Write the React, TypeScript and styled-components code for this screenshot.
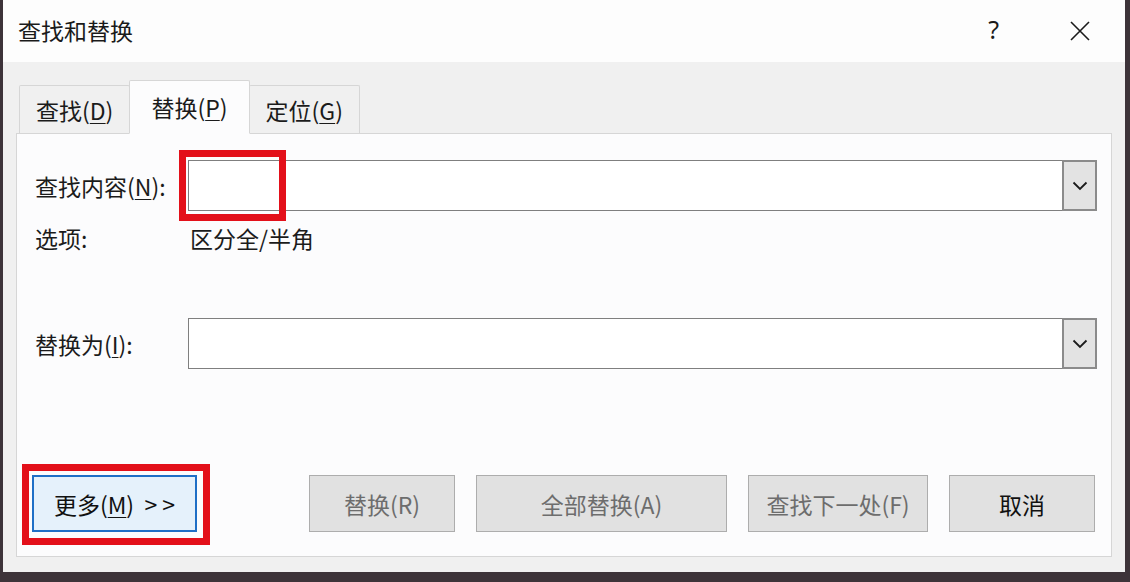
import styled, { createGlobalStyle } from "styled-components";

const GlobalStyle = createGlobalStyle`
  html, body {
    margin: 0;
    padding: 0;
    background: #3d3339;
  }
  body {
    font-family: "Noto Sans CJK SC", "Microsoft YaHei", sans-serif;
    color: #1b1b1b;
  }
`;

function App() {
  return (
    <>
      <GlobalStyle />
      <Window>
        <TitleBar>
          <span className="title">查找和替换</span>
          <TitleActions>
            <span className="help">?</span>
            <svg width="22" height="22" viewBox="0 0 22 22">
              <path d="M2 2 L20 20 M20 2 L2 20" stroke="#1b1b1b" strokeWidth="1.6" fill="none" />
            </svg>
          </TitleActions>
        </TitleBar>
        <Body>
          <Tabs>
            <Tab>
              查找(<Key>D</Key>)
            </Tab>
            <Tab $active>
              替换(<Key>P</Key>)
            </Tab>
            <Tab>
              定位(<Key>G</Key>)
            </Tab>
          </Tabs>
          <Panel>
            <FieldRow>
              <Label>
                查找内容(<Key>N</Key>):
              </Label>
              <Combo>
                <Highlight $left={-10} $top={-11} $width={107} $height={71} />
                <ComboInput />
                <DropButton>
                  <Chevron />
                </DropButton>
              </Combo>
            </FieldRow>
            <OptionsRow>
              <Label>选项:</Label>
              <span>区分全/半角</span>
            </OptionsRow>
            <FieldRow $gap={66}>
              <Label>
                替换为(<Key>I</Key>):
              </Label>
              <Combo>
                <ComboInput />
                <DropButton>
                  <Chevron />
                </DropButton>
              </Combo>
            </FieldRow>
            <ButtonRow>
              <MoreButton>
                <Highlight $left={-12} $top={-13} $width={188} $height={81} />
                更多(<Key>M</Key>) &nbsp;&gt; &gt;
              </MoreButton>
              <Actions>
                <Button $width={146} $disabled>替换(R)</Button>
                <Button $width={251} $disabled>全部替换(A)</Button>
                <Button $width={180} $disabled>查找下一处(F)</Button>
                <Button $width={146}>取消</Button>
              </Actions>
            </ButtonRow>
          </Panel>
        </Body>
      </Window>
    </>
  );
}

function Chevron() {
  return (
    <svg width="16" height="10" viewBox="0 0 16 10">
      <path d="M1.5 1.5 L8 8 L14.5 1.5" stroke="#1b1b1b" strokeWidth="1.8" fill="none" />
    </svg>
  );
}

export default App;

const Window = styled.div`
  width: 1122px;
  height: 572px;
  margin-left: 3px;
  background: #f0f0f0;
  display: flex;
  flex-direction: column;
  overflow: hidden;
`;

const TitleBar = styled.div`
  height: 62px;
  flex-shrink: 0;
  background: #fdfdfd;
  display: flex;
  align-items: center;
  justify-content: space-between;
  padding: 0 34px 0 15px;
  box-sizing: border-box;

  .title {
    font-size: 23px;
    color: #1a1a1a;
    margin-top: -2px;
  }
`;

const TitleActions = styled.div`
  display: flex;
  align-items: center;
  gap: 70px;

  .help {
    font-size: 25px;
    color: #1a1a1a;
    font-family: "Noto Sans", sans-serif;
    margin-top: -4px;
  }
`;

const Body = styled.div`
  flex: 1;
  display: flex;
  flex-direction: column;
  padding: 18px 13px 15px 13px;
`;

const Tabs = styled.div`
  display: flex;
  align-items: flex-end;
  height: 53px;
  padding-left: 3px;
  position: relative;
  z-index: 1;
`;

const Tab = styled.div<{ $active?: boolean }>`
  height: ${({ $active }) => ($active ? "54px" : "48px")};
  margin-bottom: ${({ $active }) => ($active ? "-1px" : "0")};
  box-sizing: border-box;
  padding: 0 ${({ $active }) => ($active ? "21px" : "16px")};
  display: flex;
  align-items: center;
  justify-content: center;
  font-size: 23px;
  color: #1b1b1b;
  background: ${({ $active }) => ($active ? "#fcfcfd" : "#f0f0f0")};
  border: 1px solid #d6d6d6;
  border-bottom: ${({ $active }) => ($active ? "1px solid #fcfcfd" : "none")};
  border-radius: 2px 2px 0 0;
  & + & {
    margin-left: -1px;
  }
`;

const Key = styled.span`
  text-decoration: underline;
  text-underline-offset: 3px;
  text-decoration-thickness: 1px;
`;

const Panel = styled.div`
  height: 424px;
  box-sizing: border-box;
  background: #fcfcfd;
  border: 1px solid #d6d6d6;
  padding: 26px 14px 0 18px;
  display: flex;
  flex-direction: column;
`;

const FieldRow = styled.div<{ $gap?: number }>`
  display: flex;
  align-items: center;
  height: 51px;
  margin-top: ${({ $gap }) => $gap ?? 0}px;
`;

const Label = styled.span`
  width: 153px;
  flex-shrink: 0;
  font-size: 23px;
  white-space: nowrap;
`;

const Combo = styled.div`
  flex: 1;
  height: 51px;
  box-sizing: border-box;
  display: flex;
  position: relative;
  border: 1px solid #7f7f7f;
  background: #ffffff;
`;

const ComboInput = styled.div`
  flex: 1;
`;

const DropButton = styled.div`
  width: 35px;
  margin: -1px -1px -1px 0;
  box-sizing: border-box;
  background: #e3e3e3;
  border: 2px solid #8b8b8b;
  display: flex;
  align-items: center;
  justify-content: center;
`;

const Highlight = styled.div<{ $left: number; $top: number; $width: number; $height: number }>`
  position: absolute;
  left: ${({ $left }) => $left}px;
  top: ${({ $top }) => $top}px;
  width: ${({ $width }) => $width}px;
  height: ${({ $height }) => $height}px;
  box-sizing: border-box;
  border: 7px solid #e3101a;
  pointer-events: none;
`;

const OptionsRow = styled.div`
  display: flex;
  align-items: center;
  height: 28px;
  margin-top: 13px;
  font-size: 23px;

  span:last-child {
    margin-left: 2px;
  }
`;

const ButtonRow = styled.div`
  margin-top: auto;
  margin-bottom: 24px;
  margin-left: -3px;
  display: flex;
  align-items: center;
`;

const MoreButton = styled.div`
  position: relative;
  width: 165px;
  height: 57px;
  box-sizing: border-box;
  background: #e5f1fb;
  border: 2px solid #1f6fc6;
  display: flex;
  align-items: center;
  justify-content: center;
  font-size: 23px;
  white-space: pre;
  color: #111;
`;

const Actions = styled.div`
  margin-left: auto;
  margin-right: 2px;
  display: flex;
  gap: 21px;
`;

const Button = styled.div<{ $width: number; $disabled?: boolean }>`
  width: ${({ $width }) => $width}px;
  height: 57px;
  box-sizing: border-box;
  background: #e1e1e1;
  border: 1px solid #adadad;
  display: flex;
  align-items: center;
  justify-content: center;
  font-size: 23px;
  color: ${({ $disabled }) => ($disabled ? "#6d6d6d" : "#111")};
`;
